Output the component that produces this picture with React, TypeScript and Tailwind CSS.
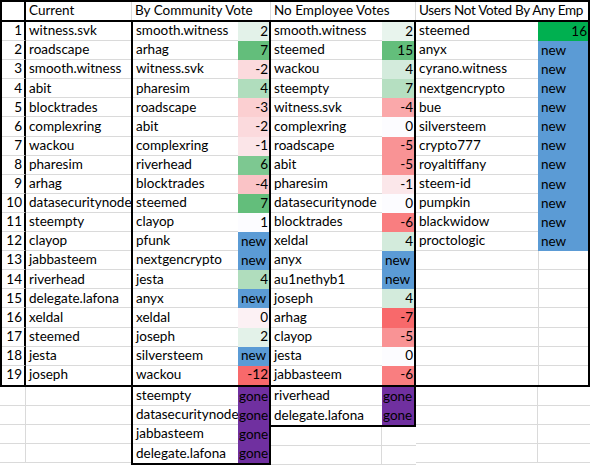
import clsx from 'clsx'

type Val = number | 'new' | 'gone' | null
type Scale = { min: number; mid: number; max: number } | null

const current = [
  'witness.svk', 'roadscape', 'smooth.witness', 'abit', 'blocktrades', 'complexring', 'wackou',
  'pharesim', 'arhag', 'datasecuritynode', 'steempty', 'clayop', 'jabbasteem', 'riverhead',
  'delegate.lafona', 'xeldal', 'steemed', 'jesta', 'joseph',
]

const community: [string, Val][] = [
  ['smooth.witness', 2], ['arhag', 7], ['witness.svk', -2], ['pharesim', 4], ['roadscape', -3],
  ['abit', -2], ['complexring', -1], ['riverhead', 6], ['blocktrades', -4], ['steemed', 7],
  ['clayop', 1], ['pfunk', 'new'], ['nextgencrypto', 'new'], ['jesta', 4], ['anyx', 'new'],
  ['xeldal', 0], ['joseph', 2], ['silversteem', 'new'], ['wackou', -12],
]
const communityGone = ['steempty', 'datasecuritynode', 'jabbasteem', 'delegate.lafona']

const noEmployee: [string, Val][] = [
  ['smooth.witness', 2], ['steemed', 15], ['wackou', 4], ['steempty', 7], ['witness.svk', -4],
  ['complexring', 0], ['roadscape', -5], ['abit', -5], ['pharesim', -1], ['datasecuritynode', 0],
  ['blocktrades', -6], ['xeldal', 4], ['anyx', 'new'], ['au1nethyb1', 'new'], ['joseph', 4],
  ['arhag', -7], ['clayop', -5], ['jesta', 0], ['jabbasteem', -6],
]
const noEmployeeGone = ['riverhead', 'delegate.lafona']

const notVoted: [string, Val][] = [
  ['steemed', 16], ['anyx', 'new'], ['cyrano.witness', 'new'], ['nextgencrypto', 'new'], ['bue', 'new'],
  ['silversteem', 'new'], ['crypto777', 'new'], ['royaltiffany', 'new'], ['steem-id', 'new'],
  ['pumpkin', 'new'], ['blackwidow', 'new'], ['proctologic', 'new'],
  ['', null], ['', null], ['', null], ['', null], ['', null], ['', null], ['', null],
]

const WHITE = [252, 252, 255]
const GREEN = [99, 190, 123]
const RED = [248, 105, 107]

function mix(a: number[], b: number[], t: number) {
  const c = a.map((x, i) => Math.round(x + (b[i] - x) * t))
  return `rgb(${c[0]}, ${c[1]}, ${c[2]})`
}

// excel style 3-colour scale, plus the manual fills
function fill(v: Val, scale: Scale) {
  if (v === 'new') return '#5b9bd5'
  if (v === 'gone') return '#7030a0'
  if (v === null) return undefined
  if (!scale) return '#00b050'
  if (v >= scale.mid) return mix(WHITE, GREEN, (v - scale.mid) / (scale.max - scale.mid))
  return mix(WHITE, RED, (scale.mid - v) / (scale.mid - scale.min))
}

function PairRow({
  name, value, nameW, valW, last, scale,
}: { name: string; value: Val; nameW: string; valW: string; last?: boolean; scale: Scale }) {
  const empty = value === null
  const isText = value === 'new' || value === 'gone'
  return (
    <div className="flex h-[19.1px]">
      <div
        className={clsx(
          nameW,
          'flex items-center pl-[3px] overflow-hidden whitespace-nowrap',
          !last && 'border-b border-[#dadada]',
        )}
      >
        {name}
      </div>
      <div
        className={clsx(
          valW,
          'flex items-center overflow-hidden whitespace-nowrap',
          isText ? (value === 'gone' ? 'pl-[1px]' : 'pl-[3px]') : 'justify-end pr-[1px]',
          empty && 'border-l border-[#dadada]',
          empty && !last && 'border-b',
        )}
        style={{ backgroundColor: fill(value, scale) }}
      >
        {value}
      </div>
    </div>
  )
}

function Filler({ widths }: { widths: string[] }) {
  return (
    <div className="flex h-[19.1px]">
      {widths.map((w, i) => (
        <div
          key={i}
          className={clsx(w, 'border-b border-[#dadada]', i < widths.length - 1 && 'border-r')}
        />
      ))}
    </div>
  )
}

export default function App() {
  const commScale = { min: -12, mid: 1, max: 7 }
  const empScale = { min: -7, mid: 0, max: 15 }

  return (
    <div className="w-[591px] h-[468px] overflow-hidden bg-white text-black text-[13.5px] leading-none font-[Lato,sans-serif]">
      {/* header row */}
      <div className="flex h-[22px] w-[590px] border-2 border-black">
        <div className="w-[24px] border-r-2 border-black" />
        <div className="w-[106px] flex items-center pl-[3px] border-r border-[#dadada]">Current</div>
        <div className="w-[139px] flex items-center pl-[3px] border-r border-[#dadada] whitespace-nowrap">
          By Community Vote
        </div>
        <div className="w-[145px] flex items-center pl-[3px] border-r border-[#dadada] whitespace-nowrap">
          No Employee Votes
        </div>
        <div className="flex-1 flex items-center pl-[3px] whitespace-nowrap tracking-[-0.3px]">
          Users Not Voted By Any Emp
        </div>
      </div>

      <div className="flex items-start">
        {/* Current */}
        <div className="flex flex-col w-[131px]">
          <div className="border-l-2 border-b-2 border-black">
            {current.map((n, i) => (
              <div key={n} className="flex h-[19.1px]">
                <div
                  className={clsx(
                    'w-[24px] flex items-center justify-end pr-[2px] border-r-2 border-r-black',
                    i < current.length - 1 && 'border-b border-b-[#dadada]',
                  )}
                >
                  {i + 1}
                </div>
                <div
                  className={clsx(
                    'w-[105px] flex items-center pl-[3px] whitespace-nowrap',
                    i < current.length - 1 && 'border-b border-[#dadada]',
                  )}
                >
                  {n}
                </div>
              </div>
            ))}
          </div>
          {[0, 1, 2, 3].map((i) => (
            <Filler key={i} widths={['w-[26px]', 'w-[105px]']} />
          ))}
        </div>

        {/* By Community Vote */}
        <div className="w-[140px] border-x-2 border-b-2 border-black">
          {community.map(([n, v], i) => (
            <PairRow key={n} name={n} value={v} nameW="w-[105px]" valW="w-[31px]" last={i === community.length - 1} scale={commScale} />
          ))}
          <div className="border-t-2 border-black">
            {communityGone.map((n, i) => (
              <PairRow key={n} name={n} value="gone" nameW="w-[105px]" valW="w-[31px]" last={i === communityGone.length - 1} scale={null} />
            ))}
          </div>
        </div>

        {/* No Employee Votes */}
        <div className="flex flex-col w-[145px]">
          <div className="border-r-2 border-b-2 border-black">
            {noEmployee.map(([n, v], i) => (
              <PairRow key={n} name={n} value={v} nameW="w-[111px]" valW="w-[32px]" last={i === noEmployee.length - 1} scale={empScale} />
            ))}
            <div className="border-t-2 border-black">
              {noEmployeeGone.map((n, i) => (
                <PairRow key={n} name={n} value="gone" nameW="w-[111px]" valW="w-[32px]" last={i === noEmployeeGone.length - 1} scale={null} />
              ))}
            </div>
          </div>
          {[0, 1].map((i) => (
            <Filler key={i} widths={['w-[111px]', 'w-[34px]']} />
          ))}
        </div>

        {/* Users Not Voted By Any Employee */}
        <div className="flex flex-col w-[174px]">
          <div className="border-r-2 border-b-2 border-black">
            {notVoted.map(([n, v], i) => (
              <PairRow key={i} name={n} value={v} nameW="w-[122px]" valW="w-[50px]" last={i === notVoted.length - 1} scale={null} />
            ))}
          </div>
          {[0, 1, 2, 3].map((i) => (
            <Filler key={i} widths={['w-[122px]', 'w-[52px]']} />
          ))}
        </div>
      </div>
    </div>
  )
}
